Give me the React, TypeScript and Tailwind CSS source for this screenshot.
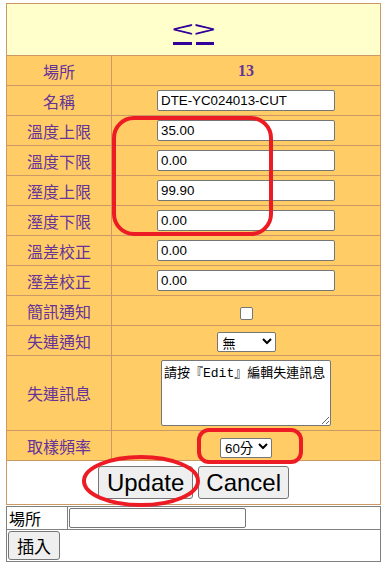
import React from "react";

const labelCls =
  "flex items-center justify-center border-r border-[#cc9966] text-[16px] text-[#663399]";

const inputCls =
  "h-[21px] w-[178px] rounded-[2px] border border-[#767676] bg-white px-[3px] text-[13.333px] text-black outline-none";

function Chevron() {
  return (
    <svg
      className="pointer-events-none absolute right-[4px] top-1/2 -translate-y-1/2"
      width="10"
      height="7"
      viewBox="0 0 10 7"
    >
      <path d="M1 1.5 L5 5.5 L9 1.5" fill="none" stroke="#000" strokeWidth="2" />
    </svg>
  );
}

function Row({ label, children, h = "h-[30px]" }: { label: string; children: React.ReactNode; h?: string }) {
  return (
    <div className={`grid grid-cols-[105px_1fr] border-b border-[#cc9966] ${h}`}>
      <div className={labelCls}>{label}</div>
      <div className="flex items-center justify-center">{children}</div>
    </div>
  );
}

export default function App() {
  const fields = [
    ["溫度上限", "35.00"],
    ["溫度下限", "0.00"],
    ["溼度上限", "99.90"],
    ["溼度下限", "0.00"],
    ["溫差校正", "0.00"],
    ["溼差校正", "0.00"],
  ];

  return (
    <div
      className="relative h-[566px] w-[387px] bg-white pl-[6px] pt-[3px]"
      style={{ fontFamily: '"Noto Sans CJK TC", "Liberation Sans", sans-serif' }}
    >
      <div className="w-[375px] border border-[#cc9966] bg-[#ffcc66]">
        <div className="flex h-[52px] items-end justify-center gap-[4px] border-b border-[#cc9966] bg-[#ffffcc] pb-[10px]">
          <a
            href="#"
            className="block w-[19px] border-b-[3px] border-[#330099] pb-[5px] text-center text-[24px] leading-[18px] text-[#330099]"
          >
            <span className="inline-block scale-x-[1.6]">&lt;</span>
          </a>
          <a
            href="#"
            className="block w-[18px] border-b-[3px] border-[#330099] pb-[5px] text-center text-[24px] leading-[18px] text-[#330099]"
          >
            <span className="inline-block scale-x-[1.6]">&gt;</span>
          </a>
        </div>

        <Row label="場所">
          <span className="font-['Liberation_Serif'] text-[16px] font-bold text-[#663399]">13</span>
        </Row>
        <Row label="名稱">
          <input className={inputCls} defaultValue="DTE-YC024013-CUT" style={{ fontFamily: '"Liberation Sans", sans-serif' }} />
        </Row>
        {fields.map(([l, v]) => (
          <Row key={l} label={l}>
            <input className={inputCls} defaultValue={v} style={{ fontFamily: '"Liberation Sans", sans-serif' }} />
          </Row>
        ))}
        <Row label="簡訊通知">
          <input
            type="checkbox"
            className="mt-[5px] h-[13px] w-[13px] appearance-none rounded-[2px] border border-[#767676] bg-white"
          />
        </Row>
        <Row label="失連通知">
          <div className="relative">
            <select className="h-[20px] w-[59px] appearance-none rounded-[2px] border border-[#767676] bg-white pl-[5px] text-[13px] text-black">
              <option>無</option>
            </select>
            <Chevron />
          </div>
        </Row>
        <Row label="失連訊息" h="h-[75px]">
          <textarea
            className="h-[66px] w-[170px] resize rounded-[2px] border border-[#767676] bg-white px-[2px] pt-[5px] text-[13px] leading-[16px] text-black"
            style={{ fontFamily: '"Liberation Mono", "Noto Sans CJK TC", monospace' }}
            defaultValue="請按『Edit』編輯失連訊息"
          />
        </Row>
        <Row label="取樣頻率">
          <div className="relative">
            <select
              className="h-[20px] w-[52px] appearance-none rounded-[2px] border border-[#767676] bg-white pl-[4px] text-[13.333px] text-black"
              style={{ fontFamily: '"Liberation Sans", "Noto Sans CJK TC", sans-serif' }}
            >
              <option>60分</option>
            </select>
            <Chevron />
          </div>
        </Row>
        <div className="flex h-[43px] items-center justify-center gap-[5px] bg-white">
          <button
            className="h-[33px] rounded-[3px] border border-[#767676] bg-[#efefef] px-[8px] text-[24px] leading-none text-black"
            style={{ fontFamily: '"Liberation Sans", sans-serif' }}
          >
            Update
          </button>
          <button
            className="h-[33px] rounded-[3px] border border-[#767676] bg-[#efefef] px-[7px] text-[24px] leading-none text-black"
            style={{ fontFamily: '"Liberation Sans", sans-serif' }}
          >
            Cancel
          </button>
        </div>
      </div>

      <div className="mt-[1px] w-[375px] border border-[#808080]">
        <div className="flex h-[23px] border-b border-[#808080]">
          <div className="flex w-[61px] items-center border-r border-[#808080] pl-[2px] text-[16px] text-black">場所</div>
          <div className="flex items-center pl-[1px]">
            <input className="h-[20px] w-[177px] rounded-[2px] border border-[#767676] bg-white" />
          </div>
        </div>
        <div className="flex h-[31px] items-center pl-[1px]">
          <button className="h-[29px] w-[52px] rounded-[3px] border border-[#767676] bg-[#efefef] text-[17px] leading-none text-black">
            插入
          </button>
        </div>
      </div>

      <svg className="pointer-events-none absolute left-0 top-0" width="387" height="566">
        <rect x="114" y="118" width="157" height="116" rx="20" fill="none" stroke="#ed1c24" strokeWidth="4" />
        <rect x="199" y="430" width="102" height="32" rx="10" fill="none" stroke="#ed1c24" strokeWidth="4" />
        <ellipse cx="141" cy="481" rx="57" ry="24" fill="none" stroke="#ed1c24" strokeWidth="4" />
      </svg>
    </div>
  );
}
